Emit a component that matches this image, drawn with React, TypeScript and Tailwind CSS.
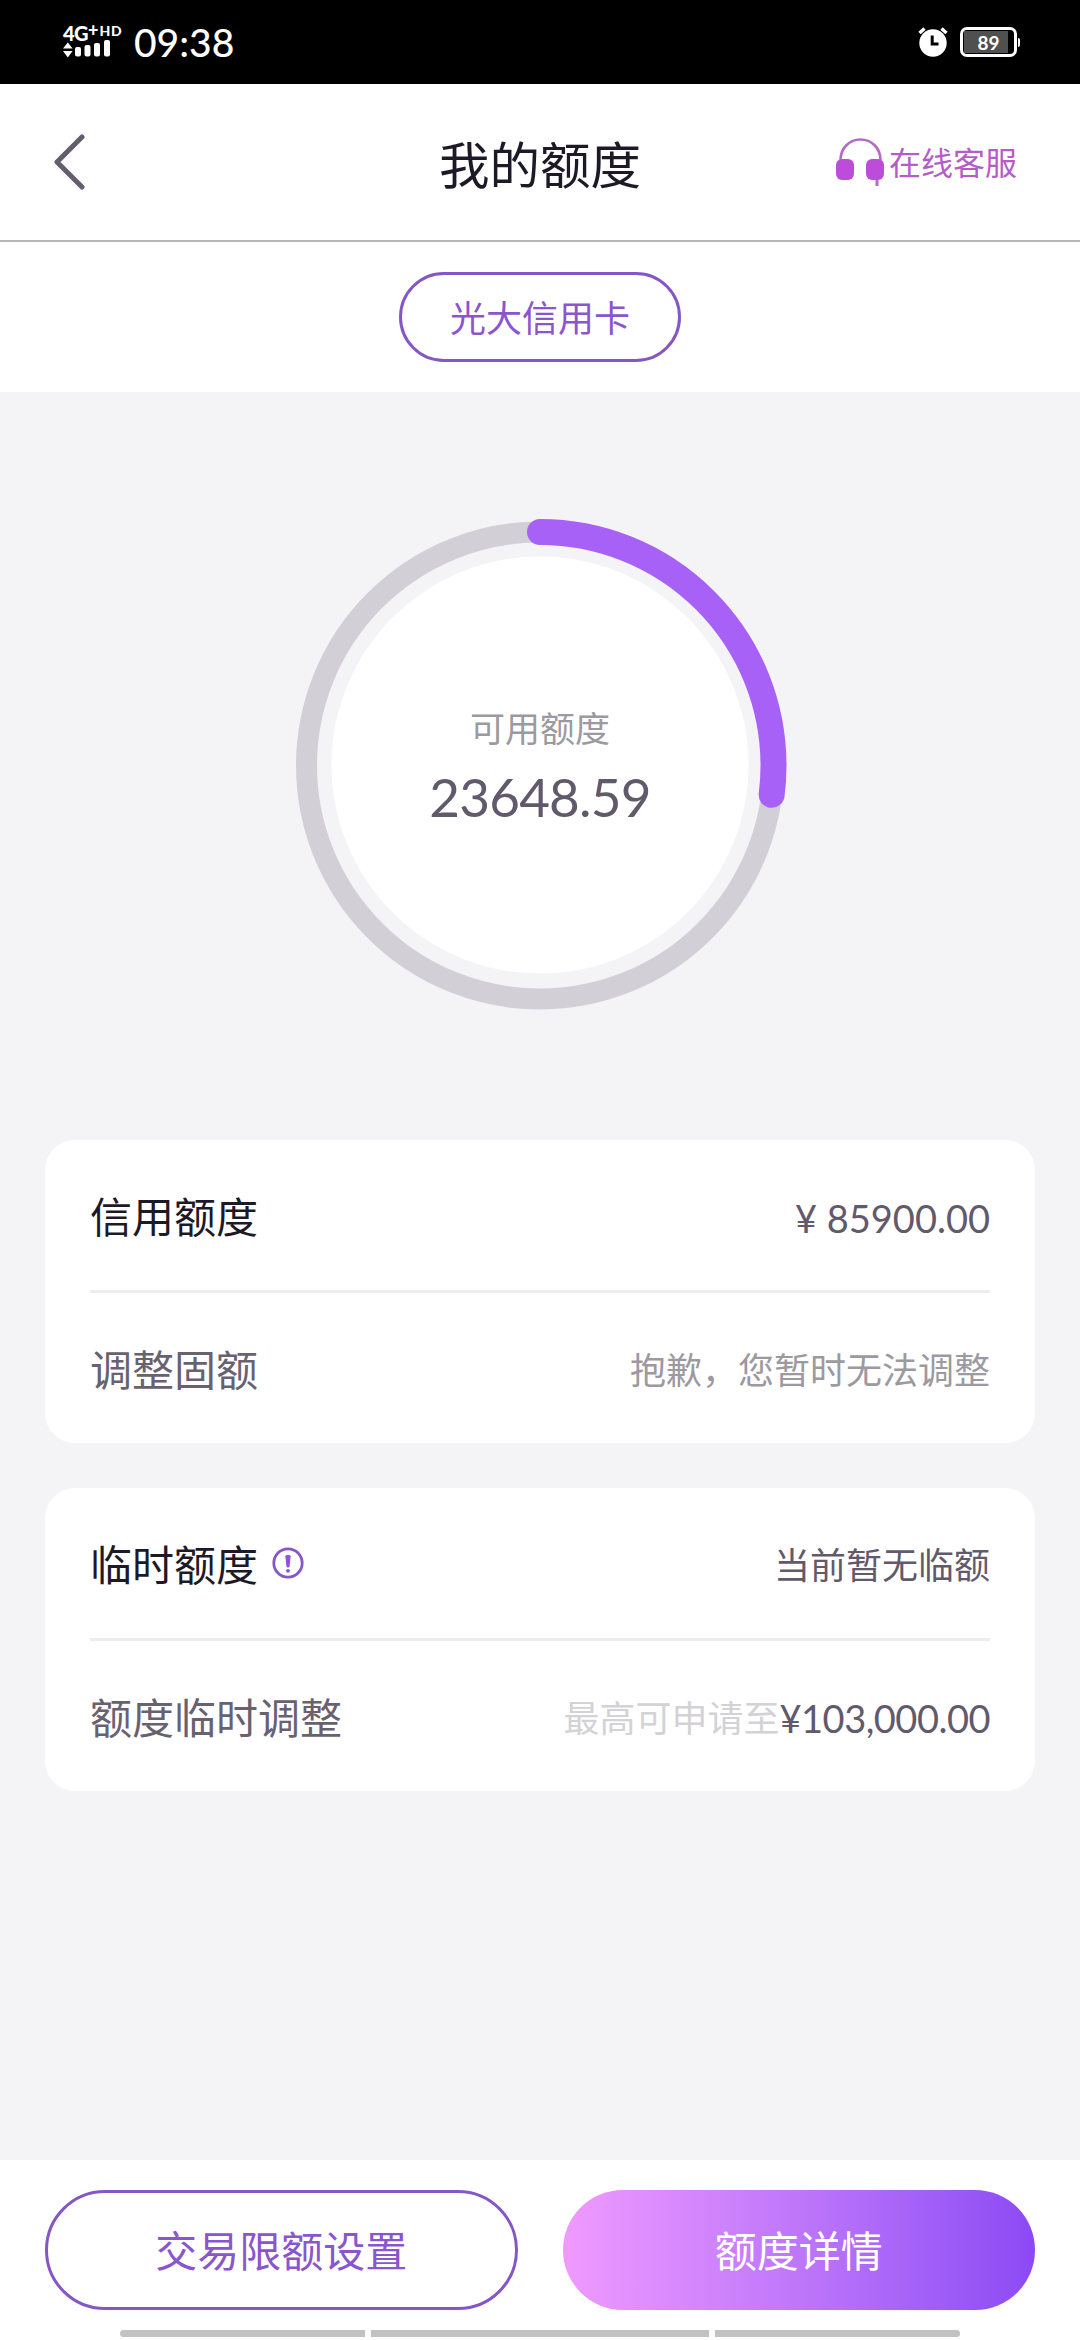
import React from "react";
import clsx from "clsx";

interface LimitRowProps {
  label: React.ReactNode;
  muted?: boolean;
  children: React.ReactNode;
}

const RING_RADIUS = 233.5;
const RING_LENGTH = 2 * Math.PI * RING_RADIUS;
const AVAILABLE_RATIO = 0.27;

function SignalIcon() {
  return (
    <svg width="48" height="17" viewBox="0 0 48 17" fill="white" className="overflow-visible">
      <path d="M0 6.5L4.8 0.5L9.6 6.5ZM0 9L4.8 15.5L9.6 9Z" />
      <rect x="12" y="5" width="6" height="9.5" rx="2" />
      <rect x="21.5" y="3" width="6" height="11.5" rx="2" />
      <rect x="31" y="1" width="6" height="13.5" rx="2" />
      <rect x="41" y="-2" width="6" height="16.5" rx="2" />
    </svg>
  );
}

function AlarmIcon() {
  return (
    <svg width="30" height="30" viewBox="0 0 30 30" fill="none">
      <circle cx="15" cy="16" r="13.7" fill="white" />
      <path d="M1.5 6L6.5 1.5M28.5 6L23.5 1.5" stroke="white" strokeWidth="3.4" />
      <path d="M14.2 8.5V17H20.5" stroke="black" strokeWidth="3" />
    </svg>
  );
}

function HeadsetIcon() {
  return (
    <svg width="49" height="49" viewBox="0 0 49 49" fill="none">
      <path d="M4.5 22C4.5 10 13.5 1.5 24.5 1.5S44.5 10 44.5 22" stroke="#b56ac6" strokeWidth="2.6" />
      <path d="M41 40V48" stroke="#b56ac6" strokeWidth="3" />
      <rect x="0" y="21" width="18" height="21" rx="6" fill="#bd4cdb" />
      <rect x="30" y="21" width="18" height="21" rx="6" fill="#bd4cdb" />
    </svg>
  );
}

function InfoIcon() {
  return (
    <svg width="32" height="32" viewBox="0 0 32 32" fill="none">
      <circle cx="16" cy="16" r="14.2" stroke="#8557c9" strokeWidth="2.8" />
      <path d="M13.4 9.2Q13.4 8 16 8T18.6 9.2L17.6 19.4Q16 21.4 14.4 19.4Z" fill="#9150dd" />
      <circle cx="16" cy="23.8" r="1.9" fill="#8557c9" />
    </svg>
  );
}

function StatusBar() {
  return (
    <div className="flex h-[84px] shrink-0 items-center bg-black pl-[63px] pr-[60px] text-white">
      <div className="flex w-[60px] flex-col">
        <div className="flex h-[17px] items-start font-['Lato',sans-serif] font-black leading-none">
          <span className="text-[20px] leading-[17px] tracking-[-0.5px]">4G</span>
          <span className="text-[18px] leading-[11px]">+</span>
          <span className="ml-px text-[14px] leading-[12px] tracking-[0.5px]">HD</span>
        </div>
        <div className="flex">
          <SignalIcon />
        </div>
      </div>
      <span className="ml-[11px] font-['Lato',sans-serif] text-[39px] font-medium leading-none">09:38</span>
      <div className="ml-auto flex items-center">
        <AlarmIcon />
        <div className="ml-[12px] flex h-[30px] w-[57px] rounded-[7px] border-[3px] border-white">
          <div className="m-px flex w-[44px] items-center justify-center bg-[#505050] pl-[5px] font-['Lato',sans-serif] text-[19px] font-bold leading-none">
            89
          </div>
        </div>
        <div className="ml-px h-[9px] w-[2px] rounded-r bg-white" />
      </div>
    </div>
  );
}

function Header() {
  return (
    <header className="grid h-[158px] shrink-0 grid-cols-3 items-center border-b-2 border-[#b5b5b5] pl-[53px] pr-[63px]">
      <svg width="34" height="56" viewBox="0 0 34 56" fill="none">
        <path d="M29 3L4 28L29 53" stroke="#655c6f" strokeWidth="5" strokeLinecap="round" strokeLinejoin="round" />
      </svg>
      <h1 className="pl-[10px] text-center text-[50.5px] leading-none text-[#1d1927]">我的额度</h1>
      <div className="flex items-center justify-end gap-[4px] text-[32px] leading-none text-[#b65cc9]">
        <HeadsetIcon />
        <span className="pb-[3px]">在线客服</span>
      </div>
    </header>
  );
}

function LimitRing() {
  return (
    <div className="mt-[123px] grid shrink-0 place-items-center">
      <svg width="500" height="500" viewBox="0 0 500 500" fill="none" className="col-start-1 row-start-1">
        <circle cx="250" cy="250.5" r={RING_RADIUS} stroke="#d2cfd7" strokeWidth="21" />
        <circle cx="250" cy="250" r="208.5" fill="white" />
        <circle
          cx="250"
          cy="250.5"
          r={RING_RADIUS}
          stroke="#a761f7"
          strokeWidth="26"
          strokeLinecap="round"
          strokeDasharray={`${RING_LENGTH * AVAILABLE_RATIO} ${RING_LENGTH}`}
          transform="rotate(-90 250 250.5)"
        />
      </svg>
      <div className="col-start-1 row-start-1 flex flex-col items-center pt-[3px]">
        <span className="text-[35px] leading-[50px] text-[#9c99a0]">可用额度</span>
        <span className="mt-[10px] font-['Lato',sans-serif] text-[53px] leading-[70px] tracking-[-0.8px] text-[#625a6b]">
          23648.59
        </span>
      </div>
    </div>
  );
}

function LimitRow({ label, muted = false, children }: LimitRowProps) {
  return (
    <div className="flex h-[150px] items-center justify-between">
      <div
        className={clsx(
          "flex items-center text-[42px] leading-none",
          muted ? "text-[#686170]" : "text-[#1d1927]"
        )}
      >
        {label}
      </div>
      <div className="flex items-center text-[36px] leading-none text-[#625a6b]">{children}</div>
    </div>
  );
}

function LimitCard({ children }: { children: React.ReactNode }) {
  return (
    <section className="rounded-[30px] bg-white px-[45px]">
      {children}
    </section>
  );
}

function Divider() {
  return <div className="h-[3px] bg-[#ededef]" />;
}

function BottomBar() {
  return (
    <footer className="mt-auto flex h-[180px] shrink-0 flex-col bg-white pt-[30px]">
      <div className="grid grid-cols-2 gap-[45px] px-[45px] text-[42px] leading-none">
        <button className="h-[120px] rounded-full border-[3px] border-[#8557c4] pb-[2px] text-[#8a55cf]">
          交易限额设置
        </button>
        <button className="h-[120px] rounded-full bg-linear-to-r from-[#f09aff] via-[#be76fa] to-[#8c49f4] pb-[2px] text-white">
          额度详情
        </button>
      </div>
      <div className="mt-[20px] flex gap-[6px] px-[120px]">
        <div className="h-[7px] w-[245px] rounded-l-full bg-[#c2c2c2]" />
        <div className="h-[7px] flex-1 bg-[#c2c2c2]" />
        <div className="h-[7px] w-[245px] rounded-r-full bg-[#c2c2c2]" />
      </div>
    </footer>
  );
}

export default function App() {
  return (
    <div className="flex h-[2340px] w-[1080px] flex-col overflow-hidden bg-[#f4f4f7] font-['Noto_Sans_CJK_SC',sans-serif]">
      <StatusBar />
      <div className="shrink-0 bg-white">
        <Header />
        <div className="flex h-[150px] items-start justify-center pt-[30px]">
          <button className="h-[90px] w-[282px] rounded-full border-[3px] border-[#8557c4] pb-[2px] text-[36px] leading-none text-[#8a55cf]">
            光大信用卡
          </button>
        </div>
      </div>

      <LimitRing />

      <main className="mt-[125px] flex flex-col gap-[45px] px-[45px]">
        <LimitCard>
          <LimitRow label="信用额度">
            <span className="pt-[5px] font-['Lato',sans-serif] text-[38px]">¥ 85900.00</span>
          </LimitRow>
          <Divider />
          <LimitRow label="调整固额" muted>
            <span className="text-[#9c99a0]">抱歉，您暂时无法调整</span>
          </LimitRow>
        </LimitCard>
        <LimitCard>
          <LimitRow
            label={
              <>
                <span className="mr-[14px]">临时额度</span>
                <InfoIcon />
              </>
            }
          >
            当前暂无临额
          </LimitRow>
          <Divider />
          <LimitRow label="额度临时调整" muted>
            <span className="text-[#d3d2d6]">最高可申请至</span>
            <span className="pt-[3px] font-['Lato',sans-serif] text-[38px] tracking-[-0.5px]">¥103,000.00</span>
          </LimitRow>
        </LimitCard>
      </main>

      <BottomBar />
    </div>
  );
}
